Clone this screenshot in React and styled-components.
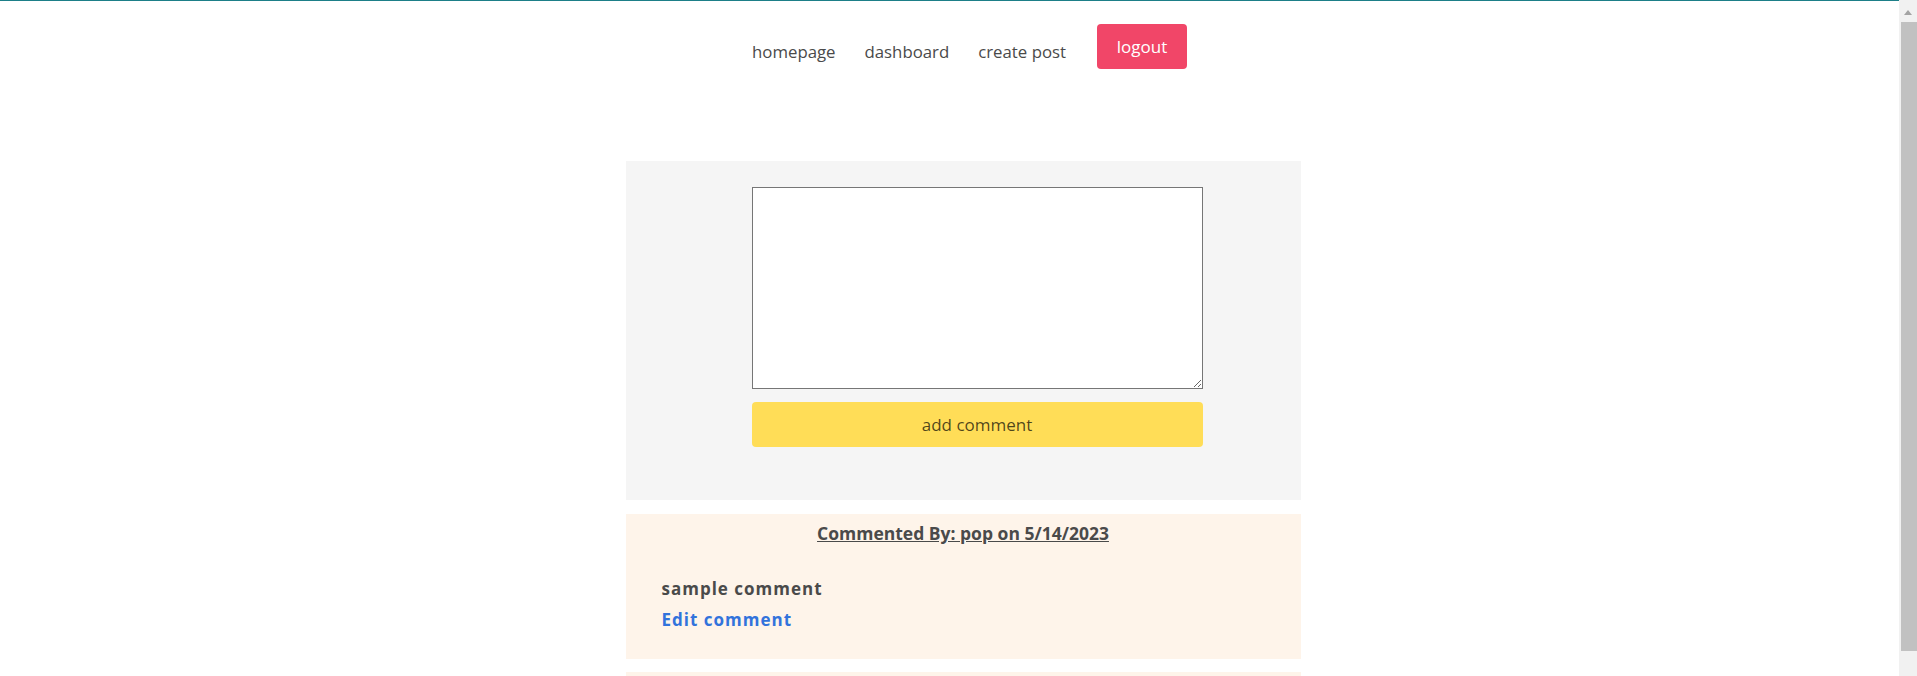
import React, { useState } from 'react';
import styled, { createGlobalStyle } from "styled-components";

const comments = [
  { id: 1, author: "pop", date: "5/14/2023", text: "sample comment" },
];

function App() {
  const [draft, setDraft] = useState("");

  return (
    <Screen>
      <GlobalStyle />
      <Page>
        <Nav>
          <NavLink href="#">homepage</NavLink>
          <NavLink href="#">dashboard</NavLink>
          <NavLink href="#">create post</NavLink>
          <LogoutButton>logout</LogoutButton>
        </Nav>

        <Main>
          <FormPanel>
            <CommentBox value={draft} onChange={(e) => setDraft(e.target.value)} />
            <AddButton>add comment</AddButton>
          </FormPanel>

          {comments.map((c) => (
            <CommentCard key={c.id}>
              <CommentHead>{`Commented By: ${c.author} on ${c.date}`}</CommentHead>
              <CommentText>{c.text}</CommentText>
              <EditLink href="#">Edit comment</EditLink>
            </CommentCard>
          ))}
          {/* next card, scrolled below the fold */}
          <CommentCard $stub />
        </Main>
      </Page>

      <Scrollbar>
        <ArrowBox>
          <Arrow />
        </ArrowBox>
        <Thumb />
      </Scrollbar>
    </Screen>
  );
}

//デザイン
const GlobalStyle = createGlobalStyle`
  html, body {
    margin: 0;
    overflow: hidden;
  }
  body {
    font-family: "Open Sans", "Noto Sans", sans-serif;
    color: #4a4a4a;
  }
`;

const Screen = styled.div`
  display: flex;
  height: 100vh;
  overflow: hidden;
`;

const Page = styled.div`
  flex: 1;
  border-top: 1px solid #1d7f88;
  overflow: hidden;
`;

const Nav = styled.nav`
  display: flex;
  justify-content: center;
  align-items: flex-start;
  gap: 29px;
  padding: 23px 0 0 40px;
`;

const NavLink = styled.a`
  padding-top: 16px;
  font-size: 16.8px;
  line-height: 24px;
  color: #4a4a4a;
  text-decoration: none;
`;

const LogoutButton = styled.button`
  width: 90px;
  height: 45px;
  margin-left: 2px;
  padding: 0;
  border: none;
  border-radius: 4px;
  background: #f14668;
  color: #fff;
  font-family: inherit;
  font-size: 17px;
  line-height: 45px;
`;

const Main = styled.main`
  display: flex;
  flex-direction: column;
  align-items: center;
  margin-top: 92px;
  padding-left: 27px;
`;

const FormPanel = styled.div`
  box-sizing: border-box;
  width: 675px;
  display: flex;
  flex-direction: column;
  align-items: flex-start;
  gap: 13px;
  padding: 26px 0 53px 126px;
  background: #f5f5f5;
`;

const CommentBox = styled.textarea`
  box-sizing: border-box;
  width: 451px;
  height: 202px;
  margin: 0;
  border: 1px solid #767676;
  background: #fff;
`;

const AddButton = styled.button`
  width: 451px;
  height: 45px;
  border: none;
  border-radius: 4px;
  background: #ffdd57;
  color: rgba(0, 0, 0, 0.7);
  font-family: inherit;
  font-size: 17px;
`;

const CommentCard = styled.div`
  box-sizing: border-box;
  width: 675px;
  min-height: ${(p) => (p.$stub ? "145px" : "0")};
  margin-top: 14px;
  padding: 7px 36px 27px;
  background: #fef4ea;

  & + & {
    margin-top: 13px;
  }
`;

const CommentHead = styled.h4`
  margin: 0 0 32px;
  text-align: center;
  font-size: 17.5px;
  font-weight: 700;
  line-height: 24px;
  text-decoration: underline;
`;

const CommentText = styled.p`
  margin: 0 0 7px;
  font-size: 17px;
  font-weight: 700;
  line-height: 24px;
  letter-spacing: 1px;
`;

const EditLink = styled.a`
  display: block;
  font-size: 17px;
  font-weight: 700;
  line-height: 24px;
  letter-spacing: 1px;
  color: #3273dc;
  text-decoration: none;
`;

const Scrollbar = styled.div`
  flex-shrink: 0;
  width: 18px;
  display: flex;
  flex-direction: column;
  background: #f1f1f1;
`;

const ArrowBox = styled.div`
  height: 22px;
  display: flex;
  justify-content: center;
  padding-top: 10px;
  box-sizing: border-box;
`;

const Arrow = styled.div`
  width: 0;
  height: 0;
  border-left: 4px solid transparent;
  border-right: 4px solid transparent;
  border-bottom: 5px solid #a3a3a3;
`;

const Thumb = styled.div`
  height: 629px;
  margin-left: 2px;
  background: #c1c1c1;
`;

export default App;
